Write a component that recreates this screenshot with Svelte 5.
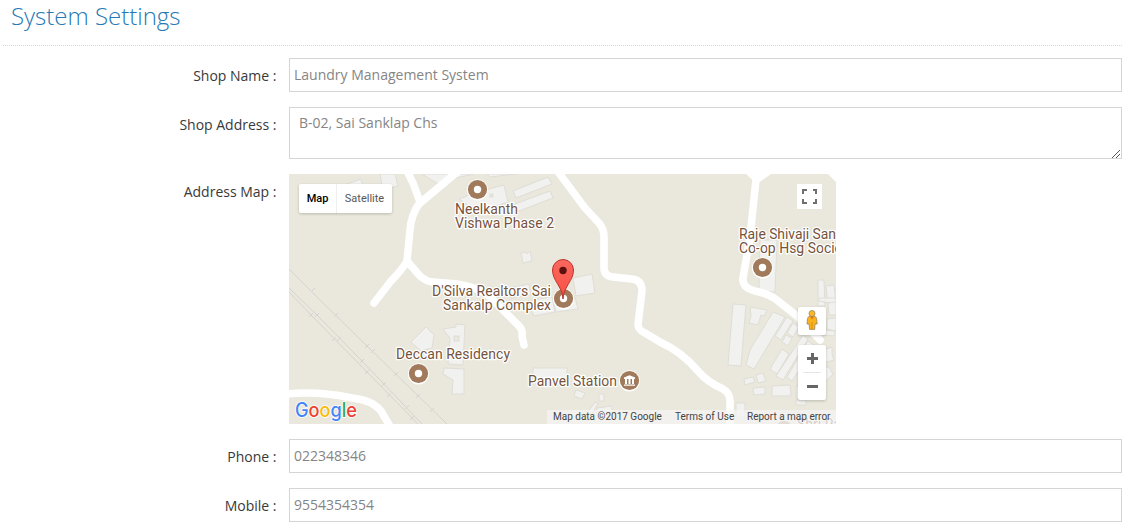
<script>
  const railTicks = [
    [313, 290], [336, 315], [367, 346], [373, 351], [396, 374], [418, 396], [432, 410],
    [311, 315], [334, 339], [367, 372], [389, 395], [412, 418],
    [317, 315], [339, 339], [362, 361], [384, 384], [407, 407]
  ];
  const buildings = [
    '347,184 361,179 364,190 350,195', '380,174 395,174 398,186 383,190', '422,174 440,185 446,180 474,174',
    '487,174 490,177 516,174', '459,199 477,192 504,185 508,202 478,212', '513,191 548,177 552,184 516,198',
    '515,204 550,191 553,198 519,211', '521,253 525,252 527,254 530,251 532,261 523,263', '573,278 592,274 595,293 576,296',
    '510,288 529,284 531,295 511,298', '527,301 552,297 555,312 534,316', '556,312 553,300 575,297 578,309',
    '760,240 777,240 775,292 759,291', '818,280 824,280 825,306 818,306', '826,286 834,285 836,305 828,305',
    '426,327 434,335 432,348 421,351 411,342', '443,329 456,327 456,324 465,325 463,365 448,364 450,338',
    '444,368 464,369 464,394 452,394 453,380 443,374', '533,368 567,368 567,380 533,380', '576,390 585,393 582,399 574,396',
    '599,394 604,394 604,401 599,401', '595,402 598,403 592,414 588,412', '597,408 612,406 612,415 596,415',
    '733,304 746,305 741,366 728,365', '750,307 767,310 764,316 761,315 758,325 749,323 751,316',
    '773,312 785,317 754,369 746,365 750,350', '787,317 793,321 781,340 775,336', '793,323 799,327 793,337 787,333',
    '786,335 792,338 788,346 782,342', '782,349 789,354 777,374 770,369', '803,335 808,339 783,380 776,376',
    '808,341 815,346 792,381 787,377', '744,379 753,377 755,382 745,385', '756,375 763,373 766,381 758,383',
    '753,388 765,387 765,394 754,395', '772,386 790,385 791,396 772,396', '796,386 814,386 814,398 796,399',
    '819,298 836,298 836,304 819,301', '828,303 836,302 836,315 829,315', '827,319 836,318 836,331 827,329',
    '823,330 835,331 834,336 823,335', '823,350 832,347 832,354 834,360 823,363', '823,367 829,367 833,374 824,383',
    '796,400 806,400 806,405 796,405', '736,403 745,403 745,417 736,417'
  ];
  const google = [['G', '#4285f4'], ['o', '#ea4335'], ['o', '#fbbc05'], ['g', '#4285f4'], ['l', '#34a853'], ['e', '#ea4335']];
  let shop = $state('Laundry Management System');
  let address = $state('B-02, Sai Sanklap Chs');
  let phone = $state('022348346');
  let mobile = $state('9554354354');
</script>

<main>
  <h1>System Settings</h1>
  <form>
    <div class="row"><label for="shop">Shop Name :</label><input id="shop" bind:value={shop} /></div>
    <div class="row area">
      <label for="address">Shop Address :</label>
      <div class="box"><textarea id="address" bind:value={address}></textarea>
        <svg class="grip" width="9" height="9" viewBox="0 0 9 9" shape-rendering="crispEdges"><path d="M0 8h1v-1h1v-1h1v-1h1v-1h1v-1h1v-1h1v-1h1M4 8h1v-1h1v-1h1v-1h1" fill="none" stroke="#555" stroke-dasharray="1 1" /></svg>
      </div>
    </div>
    <div class="row mapline">
      <span class="label">Address Map :</span>
      <div class="map">
        <svg class="canvas" width="547" height="250" viewBox="289 174 547 250">
          <rect x="289" y="174" width="547" height="250" fill="#eae8dc" />
          <g fill="none" stroke="#d4d3d1" stroke-width="1">
            <path d="M289 269L318 298L367 346L447 424M289 288L317 315L362 361L422 424M289 292L311 315L367 372L418 424" />
            {#each railTicks as [x, y]}<path d="M{x - 2} {y + 2}l4 -4" />{/each}
          </g>
          <g fill="#f1f1ef" stroke="#dfddd6" stroke-width="1">
            {#each buildings as points}<polygon {points} />{/each}
            <rect x="454" y="336" width="5" height="5" fill="#eae8dc" />
            <rect x="490" y="194" width="3" height="3" fill="#eae8dc" />
          </g>
          <g fill="none" stroke="#fff" stroke-width="7.5" stroke-linecap="round" stroke-linejoin="round">
            <path d="M406 169L413 183L420 202Q411 215 410 230L407 261Q402 270 391 281L374 303" />
            <path d="M462 168L420 203M407 261L420 276Q427 282 433 282L457 284C475 287 486 292 493 300L519 326Q523 330 522 336L524 345" />
            <path d="M556 169L585 208L599 223Q604 229 604 237L604 268Q604 276 613 277L632 279Q642 280 642 291L638 324Q638 330 645 333L660 342Q682 352 698 371Q707 382 723 389Q730 393 730 401L730 426" />
            <path d="M757 170L750 237L743 278Q742 288 755 291Q770 294 778 301L797 316L820 340" />
            <path d="M285 394Q319 391 352 398Q372 400 381 411L391 428" />
          </g>
          <path d="M746 174H771L757 184ZM828 174H836V182Z" fill="#fff" />
          <g class="places">
            <text x="455" y="214" textLength="63">Neelkanth</text>
            <text x="455" y="228" textLength="99">Vishwa Phase 2</text>
            <text x="432" y="296" textLength="119">D'Silva Realtors Sai</text>
            <text x="443" y="310" textLength="108">Sankalp Complex</text>
            <text x="396" y="359" textLength="114">Deccan Residency</text>
            <text x="528" y="386" textLength="89">Panvel Station</text>
            <text x="739" y="239" textLength="97">Raje Shivaji San</text>
            <text x="739" y="253" textLength="103">Co-op Hsg Socie</text>
            <text x="797" y="429" opacity=".8">Shri Ra</text>
          </g>
          <circle cx="784" cy="429" r="8" fill="#b99f8b" />
          {#each [[477.5, 189.5], [563.5, 298.5], [418.5, 373.5], [762.5, 267.5]] as [x, y]}
            <circle cx={x} cy={y + 0.4} r="10.6" fill="#fff" />
            <circle cx={x} cy={y} r="9.6" fill="#a1795b" /><circle cx={x} cy={y} r="3.7" fill="#fff" />
          {/each}
          <circle cx="629.5" cy="380.9" r="10.6" fill="#fff" /><circle cx="629.5" cy="380.5" r="9.6" fill="#a1795b" />
          <path d="M624 379v-1.5l5.5-2.2 5.5 2.2v1.5ZM625 379h2v5h-2ZM628.5 379h2v5h-2ZM632 379h2v5h-2ZM624 384.5h11v1.2h-11Z" fill="#fff" />
          <defs><linearGradient id="pin" x1="0" y1="0" x2="0" y2="1"><stop stop-color="#f9695f" /><stop offset="1" stop-color="#fb4e43" /></linearGradient></defs>
          <path d="M563 299C562.3 286 552.5 281 552.5 270A10.5 10.5 0 0 1 573.5 270C573.5 281 563.7 286 563 299Z" fill="url(#pin)" stroke="#bd332c" />
          <circle cx="563" cy="270.5" r="3.7" fill="#5c110f" />
          <text class="google" x="295" y="416.5" textLength="62" lengthAdjust="spacingAndGlyphs">{#each google as [letter, color]}<tspan fill={color}>{letter}</tspan>{/each}</text>
        </svg>
        <div class="types"><button type="button" class="active">Map</button><button type="button">Satellite</button></div>
        <button type="button" class="full" aria-label="Toggle fullscreen"><svg width="25" height="25"><path d="M6 10V6H10M16 6H19V10M19 15V19H16M10 19H6V15" fill="none" stroke="#707070" stroke-width="2" /></svg></button>
        <button type="button" class="person" aria-label="Street view">
          <svg width="28" height="28" viewBox="0 0 28 28"><path d="M9.5 11.5Q10 9.5 12 9.2h4Q18.2 9.5 18.6 11.5L19.2 17H17L16.7 22.4H11.6L11.1 17H9Z" fill="#fbb31c" stroke="#9a8460" stroke-width=".8" /><path d="M14 15v7" stroke="#d88b13" /><path d="M12 9.5h4l-2 3Z" fill="#e47117" /><circle cx="14" cy="6.5" r="3" fill="#fbb927" stroke="#9a8460" stroke-width=".8" /></svg>
        </button>
        <div class="zoom"><button type="button" aria-label="Zoom in"><svg width="28" height="27"><path d="M9 13.5H20M14.5 8V19" stroke="#666" stroke-width="3" /></svg></button><i></i><button type="button" aria-label="Zoom out"><svg width="28" height="27"><path d="M9 13.5H20" stroke="#666" stroke-width="3" /></svg></button></div>
        <div class="credits"><span class="data">Map data ©2017 Google</span><span class="terms">Terms of Use</span><span class="report">Report a map error</span></div>
      </div>
    </div>
    <div class="row"><label for="phone">Phone :</label><input id="phone" bind:value={phone} /></div>
    <div class="row"><label for="mobile">Mobile :</label><input id="mobile" bind:value={mobile} /></div>
  </form>
</main>

<style>
  :global(body) { background: #fff; overflow: hidden; }
  main { font: 14px/20px "Open Sans", sans-serif; color: #393939; padding: 0 9px 0 3px; height: 522px; overflow: hidden; box-sizing: border-box; }
  h1 { margin: 0; height: 45px; padding-left: 8px; font-size: 24px; line-height: 31px; font-weight: 300; color: #2679b5; border-bottom: 1px dotted #d8d8d8; }
  form { display: flex; flex-direction: column; gap: 15px; padding-top: 12px; }
  .row { display: grid; grid-template-columns: 273.5px 1fr; column-gap: 12.5px; height: 34px; }
  .area { height: 52px; }
  .mapline { height: 250px; }
  label, .label { text-align: right; padding-top: 8px; }
  input, textarea { box-sizing: border-box; width: 100%; border: 1px solid #d5d5d5; border-radius: 0; color: #858585; font: 14px/20px "Open Sans", sans-serif; background: #fff; outline: none; display: block; margin: 0; }
  input { height: 34px; padding: 5px 4px 6px; }
  .box { position: relative; }
  textarea { height: 52px; padding: 5px 9px; resize: none; overflow: hidden; }
  .grip { position: absolute; right: 1px; bottom: 1px; }
  .map { position: relative; width: 547px; height: 250px; overflow: hidden; font-family: Roboto, sans-serif; }
  .canvas { display: block; }
  .places text { font: 14px Roboto, sans-serif; fill: #75533c; stroke: #fff; stroke-width: 2.5px; stroke-linejoin: round; paint-order: stroke; }
  .google { font: 500 19.5px Inter, sans-serif; stroke: #fff; stroke-width: 1.5px; paint-order: stroke; }
  button { border: 0; padding: 0; background: #fff; font: 11px Roboto, sans-serif; color: #565656; display: block; }
  button svg { display: block; }
  .types, .full, .person, .zoom, .credits { position: absolute; }
  .types { left: 10px; top: 10px; display: flex; height: 29px; border-radius: 2px; box-shadow: 0 1px 3px #0003; overflow: hidden; }
  .types button { width: 55px; }
  .types .active { width: 38px; color: #000; font-weight: 500; border-right: 1px solid #eee; }
  .full { left: 508px; top: 10px; width: 25px; height: 25px; }
  .person { left: 509px; top: 133px; width: 28px; height: 28px; border-radius: 2px; box-shadow: 0 1px 3px #0003; }
  .zoom { left: 509px; top: 171px; width: 28px; height: 55px; border-radius: 2px; background: #fff; box-shadow: 0 1px 3px #0003; }
  .zoom button { background: none; height: 27px; }
  .zoom i { display: block; height: 1px; margin: 0 5px; background: #e6e6e6; }
  .credits { right: 0; bottom: 0; height: 14px; display: flex; font-size: 10px; line-height: 14px; color: #444; white-space: nowrap; }
  .credits span { background: #f5f5f5b3; box-sizing: border-box; padding-left: 6px; }
  .data { width: 122px; }
  .terms { width: 72px; }
  .report { width: 95px; }
</style>
